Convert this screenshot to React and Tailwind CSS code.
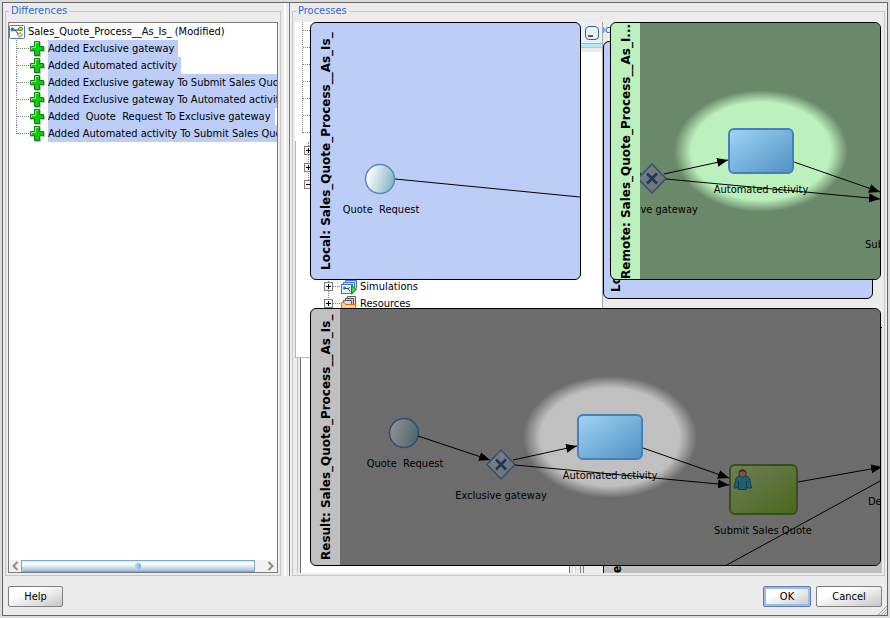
import React from 'react';

const differences = [
  'Added Exclusive gateway',
  'Added Automated activity',
  'Added Exclusive gateway To Submit Sales Quote',
  'Added Exclusive gateway To Automated activity',
  'Added  Quote  Request To Exclusive gateway',
  'Added Automated activity To Submit Sales Quote',
];

const PlusIcon = () => (
  <svg width="16" height="16" viewBox="0 0 16 16" className="shrink-0">
    <path d="M6 1h6v5h4v5h-4v5H6v-5H1V6h5z" fill="#9a9a9a" opacity="0.6" />
    <path d="M5.500 0.500h5v5h4v4h-4v5h-5v-5h-4v-4h4z" fill="#10cc10" stroke="#0a800a" />
    <path d="M6.500 6.500v-5h3M2.500 8.500v-2h4" fill="none" stroke="#8df58d" />
  </svg>
);

const ProcessIcon = () => (
  <svg width="16" height="14" viewBox="0 0 16 14" className="shrink-0">
    <rect x="0.500" y="0.500" width="15" height="13" rx="1" fill="#fff" stroke="#3f78d8" />
    <path d="M4 5h7M6 5l4 5" stroke="#333" fill="none" />
    <circle cx="3.500" cy="4.500" r="2" fill="#2f7fb5" />
    <rect x="9.500" y="2.500" width="4" height="3" rx="1" fill="#a4d65c" stroke="#4d7a22" />
    <path d="M11 7.500l2.500 2.500-2.500 2.500L8.500 10z" fill="#f5deb0" stroke="#a07a3a" />
  </svg>
);

const SimulationsIcon = () => (
  <svg width="16" height="16" viewBox="0 0 16 16" className="shrink-0">
    <path d="M4.500 5V1.500h11v8" fill="#cfe2fb" stroke="#3a78cf" />
    <path d="M2.500 7V3.500h11v8" fill="#cfe2fb" stroke="#3a78cf" />
    <rect x="0.500" y="5.500" width="11" height="9" fill="#e8f3fe" stroke="#3a78cf" />
    <circle cx="3.500" cy="9" r="1.500" fill="#2f7fb5" />
    <path d="M4 9.500h3l2 3M7 9.500l2-1" stroke="#1c4d80" fill="none" />
    <path d="M10.500 6.500l5 4-5 4.500z" fill="#3ddc3d" stroke="#128a12" />
  </svg>
);

const ResourcesIcon = () => (
  <svg width="16" height="16" viewBox="0 0 16 16" className="shrink-0">
    <path d="M6.500 9V0.500h8V10" fill="#cfe9cf" stroke="#3e6b4c" />
    <path d="M4.500 9V2.500h8V10" fill="#f5b4c4" stroke="#7d4458" />
    <path d="M2.500 9V4.500h8V10" fill="#d4def5" stroke="#4a5a8a" />
    <path d="M0.500 15V6.500h3l1 2h10.500l-1 6.500z" fill="#ffd27a" stroke="#c47a12" />
  </svg>
);

const Expander = ({ open }) => (
  <svg width="9" height="9" viewBox="0 0 9 9" className="shrink-0">
    <rect x="0.500" y="0.500" width="8" height="8" fill="#f2f2f2" stroke="#808080" />
    <path d={open ? 'M2 4.500h5' : 'M2 4.500h5M4.500 2v5'} stroke="#000" />
  </svg>
);

const Defs = ({ id }) => (
  <defs>
    <linearGradient id={`${id}-start`} x1="0" y1="0" x2="1" y2="0.300">
      <stop offset="0.200" stopColor="#f6fafb" />
      <stop offset="1" stopColor="#8fbacb" />
    </linearGradient>
    <linearGradient id={`${id}-auto`} x1="0" y1="0" x2="1" y2="1">
      <stop offset="0" stopColor="#a0d4f5" />
      <stop offset="1" stopColor="#4f91c2" />
    </linearGradient>
    <linearGradient id={`${id}-gate`} x1="0" y1="0" x2="1" y2="1">
      <stop offset="0" stopColor="#dde3e6" />
      <stop offset="1" stopColor="#b2c8d6" />
    </linearGradient>
    <linearGradient id={`${id}-user`} x1="0" y1="0" x2="1" y2="1">
      <stop offset="0.100" stopColor="#bedb96" />
      <stop offset="1" stopColor="#80b92c" />
    </linearGradient>
    <radialGradient
      id={`${id}-spot`}
      gradientUnits="userSpaceOnUse"
      cx="0"
      cy="0"
      r="1"
      gradientTransform="translate(610 437) scale(87 61)"
    >
      <stop offset="0.800" stopColor="#000" stopOpacity="0" />
      <stop offset="1" stopColor="#000" stopOpacity="0.435" />
    </radialGradient>
    <marker
      id={`${id}-arrow`}
      markerUnits="userSpaceOnUse"
      markerWidth="12"
      markerHeight="10"
      refX="11"
      refY="5"
      orient="auto"
    >
      <path d="M0 0.500L11 5L0 9.500z" fill="#000" />
    </marker>
  </defs>
);

const StartEvent = ({ id, x, y, label }) => (
  <g>
    <circle cx={x} cy={y} r="14.500" fill={`url(#${id}-start)`} stroke="#5f87b5" strokeWidth="1.500" />
    <text x={x + 1} y={y + 34} textAnchor="middle" className="whitespace-pre">
      {label}
    </text>
  </g>
);

// Quote process diagram; viewBox scrolls it inside each lane
const QuoteDiagram = ({ id, left, top, width, height }) => (
  <svg
    width={width}
    height={height}
    viewBox={`${left} ${top} ${width} ${height}`}
    className="block shrink-0 text-[11px]"
  >
    <Defs id={id} />
    <StartEvent id={id} x={404} y={433} label="Quote  Request" />

    <path d="M501 450l14 14.500-14 14.500-14-14.500z" fill={`url(#${id}-gate)`} stroke="#6288bc" strokeWidth="1.500" />
    <path d="M496 459.500l10 10M506 459.500l-10 10" stroke="#2f5f98" strokeWidth="2.500" />
    <text x="501" y="499" textAnchor="middle">Exclusive gateway</text>

    <rect x="578" y="415" width="64" height="44" rx="5" fill={`url(#${id}-auto)`} stroke="#4680b8" strokeWidth="2" />
    <text x="610" y="479" textAnchor="middle">Automated activity</text>

    <rect x="730" y="465" width="67" height="49" rx="5" fill={`url(#${id}-user)`} stroke="#648a34" strokeWidth="2" />
    <path
      d="M740 475.500h5c3 1 4.500 2 5 5l1.500 7.500h-4l-1-2v3.500h-8v-3.500l-1 2h-3.500l1.500-7.500c0.500-3 1.500-4 4.500-5z"
      fill="#38a8c4"
      stroke="#1d6a80"
    />
    <path d="M738.500 481v7M746.500 481v7" stroke="#1d6a80" />
    <ellipse cx="742.500" cy="473.500" rx="3.500" ry="3.800" fill="#d59f84" stroke="#7a5240" />
    <path d="M738.500 473.500c-0.500-5 8.500-5 8 0l-1-2h-6z" fill="#6b3a22" />
    <text x="763" y="534" textAnchor="middle">Submit Sales Quote</text>

    <text x="868" y="505">Determine Discount</text>

    <g stroke="#000" fill="none">
      <path d="M418 436L490 460" markerEnd={`url(#${id}-arrow)`} />
      <path d="M513 460L577 446" markerEnd={`url(#${id}-arrow)`} />
      <path d="M515 465L729 485" markerEnd={`url(#${id}-arrow)`} />
      <path d="M643 448L729 478" markerEnd={`url(#${id}-arrow)`} />
      <path d="M798 482L882 467" markerEnd={`url(#${id}-arrow)`} />
      <path d="M725 566L882 480" />
    </g>
    <rect x={left} y={top} width={width} height={height} fill={`url(#${id}-spot)`} />
  </svg>
);

const LocalDiagram = () => (
  <svg width="240" height="256" viewBox="340 23 240 256" className="block shrink-0 text-[11px]">
    <Defs id="local" />
    <path d="M395 179L580 197" stroke="#000" />
    <StartEvent id="local" x={380} y={179} label="Quote  Request" />
  </svg>
);

const Lane = ({ title, className, children }) => (
  <section className={`flex h-[258px] overflow-hidden rounded-md border border-black ${className}`}>
    <h2 className="w-[29px] shrink-0 rotate-180 text-center font-['DejaVu_Sans',sans-serif] text-[12px] leading-[31px] font-bold whitespace-nowrap [writing-mode:vertical-rl]">
      {title}
    </h2>
    {children}
  </section>
);

// Application window that shows through between the lanes
const Backdrop = () => (
  <div className="absolute inset-0 overflow-hidden" aria-hidden="true">
    <div className="absolute inset-y-0 left-0 w-[308px] border-r border-[#a8a8a8] bg-white" />
    <div className="absolute top-[119px] left-0 h-[217px] w-4 border-b border-l border-[#b4b4b4]" />
    <div className="absolute top-[336px] bottom-0 left-0 flex w-[308px] bg-[#ececec]">
      <div className="ml-0.5 w-[3px] border-l border-[#c4c4c4]" />
      <div className="w-[270px] border-x border-[#707070] bg-white" />
      <div className="ml-0.5 w-1 border-x border-[#d0d0d0] bg-white" />
      <div className="ml-1 w-1 border-x border-[#808080]" />
    </div>
    <div className="absolute top-0 left-[286px] h-[30px] w-[21px] bg-[#ececec]">
      <div className="flex h-[22px] items-center justify-center border-b border-[#a4b4bc] bg-[#e6f1f9]">
        <div className="flex h-3.5 w-3.5 items-end rounded-sm border border-[#505c70] p-0.5">
          <div className="h-0.5 w-[5px] bg-[#505c70]" />
        </div>
      </div>
      <div className="h-1 border-b border-[#9cd0e4] bg-[#b6eaf7]" />
    </div>

    <div className="absolute top-0 left-[7px] w-3 border-l border-dotted border-[#808080]">
      {[0, 1, 2, 3, 4, 5, 6].map((row) => (
        <div
          key={row}
          className="h-[17px] border-b border-dotted border-[#808080] first:h-[9px]"
        />
      ))}
    </div>
    <div className="absolute top-[120px] left-[13px] h-10 border-l border-dotted border-[#808080]" />
    <div className="absolute top-[120px] left-[9px] flex h-[47px] flex-col justify-end gap-2">
      <Expander />
      <Expander />
      <Expander open />
    </div>
    <div className="absolute top-[256px] left-[33px] h-8 border-l border-dotted border-[#808080]" />
    <ul className="absolute top-[256px] left-[29px]">
      {[
        ['Simulations', SimulationsIcon],
        ['Resources', ResourcesIcon],
      ].map(([name, Icon]) => (
        <li key={name} className="flex h-[17px] items-center">
          <Expander />
          <span className="mr-px w-[7px] border-t border-dotted border-[#808080]" />
          <Icon />
          <span className="ml-[3px]">{name}</span>
        </li>
      ))}
    </ul>

    <div className="absolute inset-y-0 right-0 left-[308px] bg-[#ececec]">
      <div className="overflow-hidden leading-4 text-[#3165ce]">
        <span className="-ml-1">ocesses</span>
      </div>
      <div className="absolute top-[19px] flex h-[258px] w-[270px] rounded-md border border-black bg-[#bccef8]">
        <span className="rotate-180 pt-1.5 font-['DejaVu_Sans',sans-serif] text-[12px] leading-6 font-bold whitespace-nowrap [writing-mode:vertical-rl]">
          Local: Sales_Quote_Process__As_Is_
        </span>
      </div>
      <div className="absolute top-[305px] right-0 bottom-0 left-0 flex items-end border-t border-l border-black bg-[#c0c0c0]">
        <span className="h-2 rotate-180 overflow-hidden text-[12px] leading-[26px] font-bold [writing-mode:vertical-rl]">
          e
        </span>
      </div>
    </div>
  </div>
);

const DifferencesTree = () => (
  <div className="flex min-w-0 flex-1 flex-col overflow-hidden border border-[#7c7c7c] bg-white">
    <div className="flex h-[17px] items-center gap-[3px]">
      <ProcessIcon />
      <span className="whitespace-nowrap">Sales_Quote_Process__As_Is_ (Modified)</span>
    </div>
    <ul className="flex-1 overflow-hidden">
      {differences.map((text) => (
        <li key={text} className="group flex h-[17px] items-center pl-[7px]">
          <span className="h-[17px] border-l border-dotted border-[#808080] group-last:h-[9px] group-last:self-start" />
          <span className="w-3 shrink-0 border-t border-dotted border-[#808080]" />
          <PlusIcon />
          <span className="ml-[3px] bg-[#bccef8] pr-1 leading-[17px] whitespace-pre">{text}</span>
        </li>
      ))}
    </ul>
    <div className="flex h-3 shrink-0 items-stretch bg-[#f2f2f2]">
      <button type="button" aria-label="Scroll left" className="flex w-3 items-center justify-center">
        <svg width="7" height="10" viewBox="0 0 7 10" fill="none" stroke="#8c8c8c" strokeWidth="2">
          <path d="M5.500 1L1.500 5l4 4" />
        </svg>
      </button>
      <div className="flex flex-1 pr-2">
        <div className="flex flex-1 items-center justify-center border border-[#7fa6cf] bg-linear-to-b from-[#dce9f5] via-white via-30% to-[#9dbfdf]">
          <span className="h-1.5 w-1.5 rounded-full bg-linear-to-r from-[#c4dcff] to-[#6ea4f4]" />
        </div>
      </div>
      <button type="button" aria-label="Scroll right" className="flex w-3.5 items-center justify-center">
        <svg width="7" height="10" viewBox="0 0 7 10" fill="none" stroke="#8c8c8c" strokeWidth="2">
          <path d="M1.500 1l4 4-4 4" />
        </svg>
      </button>
    </div>
  </div>
);

const DialogButton = ({ children, className }) => (
  <button
    type="button"
    className={`h-[21px] rounded-xs border bg-linear-to-br from-white from-30% to-[#c8c8c8] leading-none ${className}`}
  >
    {children}
  </button>
);

const App = () => {
  return (
    <div className="flex min-h-screen flex-col bg-[#dcdcdc] p-0.5 font-['DejaVu_Sans_Condensed','DejaVu_Sans',sans-serif] text-[11px] leading-4 text-black">
      <main className="relative flex flex-1 flex-col border border-[#666] bg-[#ececec]">
        <div className="flex flex-1">
          <fieldset className="ml-0.5 flex w-[276px] min-w-0 shrink-0 border border-[#c6c6c6] px-0.5 pt-[3px] pb-0.5">
            <legend className="ml-px px-0.5 text-[#3165ce]">Differences</legend>
            <DifferencesTree />
          </fieldset>
          <div className="mr-0.5 ml-[3px] w-[6px] border-r border-[#7c7c7c] border-l-2 border-l-white" />
          <fieldset className="mr-0.5 flex min-w-0 flex-1 border border-[#c6c6c6] px-0.5 pt-[3px] pb-0.5">
            <legend className="ml-px px-0.5 text-[#3165ce]">Processes</legend>
            <div className="relative min-w-0 flex-1 overflow-hidden">
              <Backdrop />
              <div className="relative flex flex-col gap-7 pl-[15px]">
                <div className="flex justify-between">
                  <Lane title="Local: Sales_Quote_Process__As_Is_" className="w-[271px] bg-[#bccef8]">
                    <LocalDiagram />
                  </Lane>
                  <Lane title="Remote: Sales_Quote_Process__As_I..." className="mr-px w-[271px] bg-[#bcf0bc]">
                    <QuoteDiagram id="remote" left={489} top={309} width={240} height={256} />
                  </Lane>
                </div>
                <Lane title="Result: Sales_Quote_Process__As_Is_" className="mr-px bg-[#c0c0c0]">
                  <QuoteDiagram id="result" left={340} top={309} width={541} height={256} />
                </Lane>
              </div>
            </div>
          </fieldset>
        </div>
        <footer className="flex gap-[5px] px-[5px] pt-2.5 pb-2">
          <DialogButton className="mr-auto w-[55px] border-[#808080]">Help</DialogButton>
          <DialogButton className="w-12 border-[#5f7fae] ring-2 ring-[#9cbcf0] ring-inset">OK</DialogButton>
          <DialogButton className="w-[66px] border-[#808080]">Cancel</DialogButton>
        </footer>
        <svg width="9" height="9" viewBox="0 0 9 9" className="absolute right-0 bottom-0" stroke="#9a9a8c">
          <path d="M0 9L9 0M3 9L9 3M6 9L9 6" />
        </svg>
      </main>
    </div>
  );
};

export default App;
